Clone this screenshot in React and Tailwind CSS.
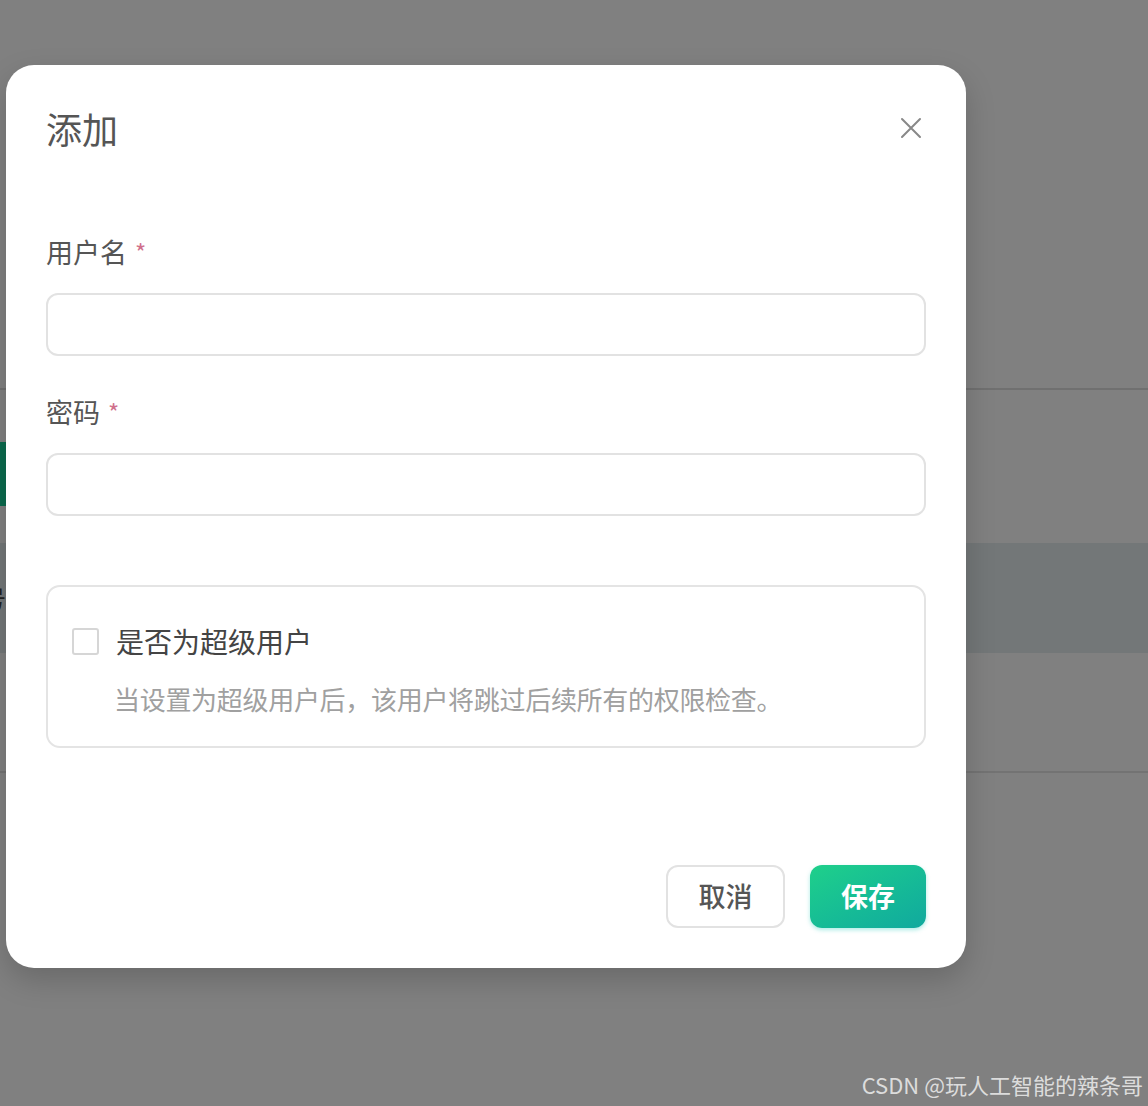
import React from 'react';

const font = { fontFamily: '"Noto Sans CJK SC", "Noto Sans", sans-serif' };

const Label = ({ text, className = '' }) => (
  <div className={`flex items-center h-[36px] text-[27px] leading-[36px] text-[#555] ${className}`}>
    <span>{text}</span>
    <span className="ml-[8px] text-[24px] text-[#d0708c]">*</span>
  </div>
);

const Input = ({ className = '' }) => (
  <input
    type="text"
    className={`block w-full h-[63px] rounded-[12px] border-2 border-[#e2e2e2] bg-white px-4 outline-none ${className}`}
  />
);

export default function App() {
  return (
    <div className="relative w-full h-[1106px] overflow-hidden bg-[#808080] [font-family:'Noto_Sans_CJK_SC','Noto_Sans',sans-serif]">
      {/* dimmed page behind the modal */}
      <div className="absolute inset-0 flex flex-col">
        <div className="h-[390px] border-b-2 border-[#707070]" />
        <div className="h-[52px]" />
        <div className="h-[64px] w-[6px] bg-[#0b6b4e]" />
        <div className="h-[37px]" />
        <div className="h-[110px] bg-[#737778] text-[24px] leading-[110px] text-[#222] -ml-[18px]">号</div>
        <div className="h-[120px] border-b-2 border-[#737373]" />
      </div>

      {/* modal */}
      <div className="absolute left-[6px] top-[65px] w-[960px] h-[903px] rounded-[28px] bg-white shadow-[0_12px_30px_rgba(0,0,0,0.18)] px-[40px] pt-[40px] pb-[40px] flex flex-col">
        <div className="flex items-center justify-between h-[46px]">
          <h2 className="text-[36px] leading-[46px] text-[#555] font-normal">添加</h2>
          <button className="mr-[4px] text-[#888]">
            <svg width="22" height="22" viewBox="0 0 22 22" fill="none" stroke="currentColor" strokeWidth="2" strokeLinecap="round">
              <path d="M2 2L20 20M20 2L2 20" />
            </svg>
          </button>
        </div>

        <Label text="用户名" className="mt-[83px]" />
        <Input className="mt-[23px]" />

        <Label text="密码" className="mt-[38px]" />
        <Input className="mt-[23px]" />

        <div className="mt-[69px] h-[163px] rounded-[14px] border-2 border-[#e4e4e4] pl-[24px] pt-[36px]">
          <label className="flex items-center h-[36px]">
            <span className="w-[27px] h-[27px] rounded-[3px] border-2 border-[#d6d6d6] bg-white" />
            <span className="ml-[17px] text-[28px] leading-[36px] text-[#444]">是否为超级用户</span>
          </label>
          <p className="mt-[22px] ml-[42px] text-[26px] tracking-[-0.3px] leading-[36px] text-[#a0a0a0]">
            当设置为超级用户后，该用户将跳过后续所有的权限检查。
          </p>
        </div>

        <div className="mt-auto flex justify-end gap-[25px]">
          <button className="w-[119px] h-[63px] rounded-[12px] border-2 border-[#e2e2e2] bg-white text-[27px] font-medium text-[#555]">
            取消
          </button>
          <button className="w-[116px] h-[63px] rounded-[12px] bg-gradient-to-br from-[#1fd08a] to-[#11a99e] text-[27px] font-bold text-white shadow-[0_2px_4px_rgba(20,200,180,0.35)]">
            保存
          </button>
        </div>
      </div>

      <div className="absolute right-[5px] bottom-[7px] text-[22px] leading-[30px] text-[#dcdcdc]" style={font}>
        CSDN @玩人工智能的辣条哥
      </div>
    </div>
  );
}
